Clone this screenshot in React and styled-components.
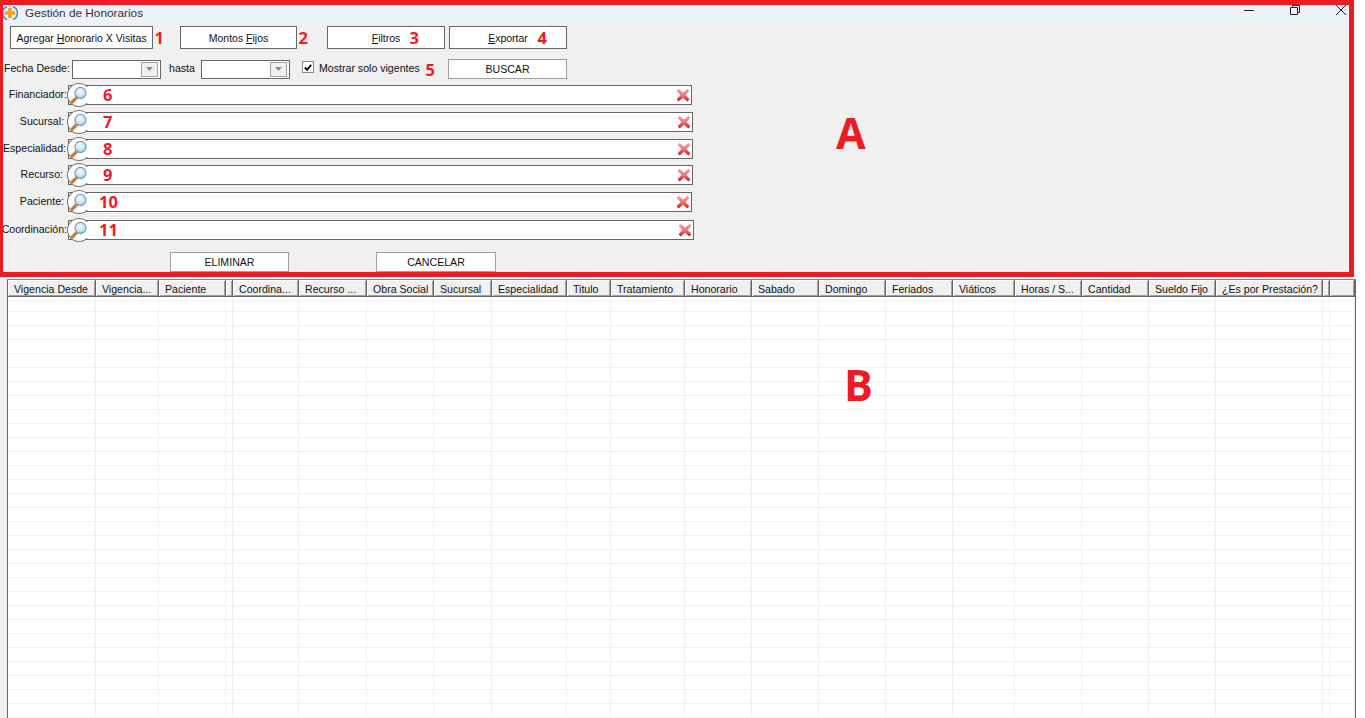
import React from 'react';
import styled, { createGlobalStyle } from 'styled-components';

const FONT = `"Liberation Sans", Arial, sans-serif`;
const RED = '#ed1c24';

const COLUMNS = [
  ['Vigencia Desde', 88],
  ['Vigencia...', 63],
  ['Paciente', 67],
  ['', 7],
  ['Coordina...', 66],
  ['Recurso ...', 68],
  ['Obra Social', 67],
  ['Sucursal', 58],
  ['Especialidad', 75],
  ['Titulo', 44],
  ['Tratamiento', 74],
  ['Honorario', 67],
  ['Sabado', 67],
  ['Domingo', 67],
  ['Feriados', 67],
  ['Viáticos', 62],
  ['Horas / S...', 67],
  ['Cantidad', 67],
  ['Sueldo Fijo', 67],
  ['¿Es por Prestación?', 107],
  ['', 7],
  ['', 25],
];

const LOOKUPS = [
  { label: 'Financiador:', gap: 0, pad: 1, width: 624, num: '6' },
  { label: 'Sucursal:', gap: 7, pad: 4, width: 625, num: '7' },
  { label: 'Especialidad:', gap: 7, pad: 2, width: 625, num: '8' },
  { label: 'Recurso:', gap: 6, pad: 5, width: 625, num: '9' },
  { label: 'Paciente:', gap: 7, pad: 4, width: 624, num: '10' },
  { label: 'Coordinación:', gap: 8, pad: 1, width: 626, num: '11' },
];

const ROW_COUNT = 30;

function Magnifier() {
  return (
    <svg width="20" height="20" viewBox="0 0 20 20">
      <defs>
        <radialGradient id="glass" cx="0.45" cy="0.35" r="0.75">
          <stop offset="0" stopColor="#f4fbff" />
          <stop offset="0.6" stopColor="#bfe3f7" />
          <stop offset="1" stopColor="#5fa8d8" />
        </radialGradient>
      </defs>
      <path d="M3.2 17 L8 12.2" stroke="#d98a34" strokeWidth="3.4" strokeLinecap="round" />
      <path d="M3 17.4 L6.4 14" stroke="#6f6a70" strokeWidth="1" strokeLinecap="round" />
      <circle cx="11.5" cy="8" r="5.6" fill="url(#glass)" stroke="#7f98ad" strokeWidth="1.1" />
    </svg>
  );
}

function ClearIcon() {
  return (
    <svg width="14" height="14" viewBox="0 0 14 14">
      <defs>
        <linearGradient id="cross" x1="0" y1="0" x2="0" y2="1">
          <stop offset="0" stopColor="#f4a6a6" />
          <stop offset="0.55" stopColor="#e87474" />
          <stop offset="1" stopColor="#d40f1c" />
        </linearGradient>
      </defs>
      <path
        d="M2.5 0.8 L7 4.6 L11.5 0.8 L13.4 3 L9.6 7 L13.4 11.2 L11.4 13.4 L7 9.8 L2.6 13.4 L0.6 11.2 L4.4 7 L0.6 3 Z"
        fill="url(#cross)"
      />
    </svg>
  );
}

function AppLogo() {
  return (
    <svg width="16" height="16" viewBox="0 0 16 16">
      <path d="M5 1.5 A7 7 0 0 0 5 14.5" fill="none" stroke="#4a8fb5" strokeWidth="1.6" />
      <path d="M11 1.5 A7 7 0 0 1 11 14.5" fill="none" stroke="#4a8fb5" strokeWidth="1.6" />
      <path d="M6 3 H10 V6 H13 V10 H10 V13 H6 V10 H3 V6 H6 Z" fill="#f5a623" />
    </svg>
  );
}

function ComboArrow() {
  return (
    <ComboButton>
      <svg width="7" height="4" viewBox="0 0 7 4">
        <path d="M0 0 H7 L3.5 4 Z" fill="#8a8a8a" />
      </svg>
    </ComboButton>
  );
}

export default function App() {
  return (
    <>
      <GlobalStyle />
      <Page>
        <Window>
          <TitleBar>
            <AppLogo />
            <TitleText>Gestión de Honorarios</TitleText>
            <WindowControls>
              <svg width="12" height="12" viewBox="0 0 12 12">
                <path d="M1 6.5 H11" stroke="#222" strokeWidth="1" />
              </svg>
              <svg width="12" height="12" viewBox="0 0 12 12">
                <path d="M1.5 3.5 H8.5 V10.5 H1.5 Z M3.5 3 V1.5 H10.5 V8.5 H9" fill="none" stroke="#222" strokeWidth="1" />
              </svg>
              <svg width="12" height="12" viewBox="0 0 12 12">
                <path d="M1 1 L11 11 M11 1 L1 11" stroke="#222" strokeWidth="1" />
              </svg>
            </WindowControls>
          </TitleBar>

          <Form>
            <ButtonRow>
              <ToolButton $width={143} $after={27}>
                Agregar <u>H</u>onorario X Visitas
                <Mark $right={-12} $lift={1}>1</Mark>
              </ToolButton>
              <ToolButton $width={117} $after={30}>
                Montos <u>F</u>ijos
                <Mark $right={-12} $lift={1}>2</Mark>
              </ToolButton>
              <ToolButton $width={118} $after={4}>
                <u>F</u>iltros
                <Mark $right={25} $lift={1}>3</Mark>
              </ToolButton>
              <ToolButton $width={118}>
                <u>E</u>xportar
                <Mark $right={19} $lift={1}>4</Mark>
              </ToolButton>
            </ButtonRow>

            <DateRow>
              <DateLabel>Fecha Desde:</DateLabel>
              <DateInput>
                <ComboArrow />
              </DateInput>
              <HastaLabel>hasta</HastaLabel>
              <DateInput>
                <ComboArrow />
              </DateInput>
              <CheckBox>
                <svg width="11" height="11" viewBox="0 0 11 11">
                  <path d="M2 5.5 L4.5 8 L9 2.5" fill="none" stroke="#000" strokeWidth="2" />
                </svg>
              </CheckBox>
              <CheckText>
                Mostrar solo vigentes
                <Mark $right={-15}>5</Mark>
              </CheckText>
              <FlatButton $width={119} $left={28}>BUSCAR</FlatButton>
            </DateRow>

            <LookupList>
              {LOOKUPS.map(row => (
                <LookupRow key={row.label} $gap={row.gap}>
                  <LookupLabel $pad={row.pad}>{row.label}</LookupLabel>
                  <LookupField $width={row.width}>
                    <MagnifierBadge>
                      <Magnifier />
                    </MagnifierBadge>
                    <FieldMark $wide={row.num.length > 1}>{row.num}</FieldMark>
                    <ClearSlot>
                      <ClearIcon />
                    </ClearSlot>
                  </LookupField>
                </LookupRow>
              ))}
            </LookupList>

            <ActionRow>
              <FlatButton $width={119} $left={170}>ELIMINAR</FlatButton>
              <FlatButton $width={120} $left={87}>CANCELAR</FlatButton>
            </ActionRow>
          </Form>

          <SectionMark $top={104} $left={836}>A</SectionMark>
          <RedFrame />
        </Window>

        <GridArea>
          <Grid>
            <HeaderRow>
              {COLUMNS.map(([title, width], i) => (
                <HeaderCell key={i} $width={width}>{title}</HeaderCell>
              ))}
            </HeaderRow>
            <Body>
              {Array.from({ length: ROW_COUNT }).map((_, r) => (
                <BodyRow key={r}>
                  {COLUMNS.map(([, width], i) => (
                    <BodyCell key={i} $width={width} />
                  ))}
                </BodyRow>
              ))}
            </Body>
            <SectionMark $top={76} $left={836}>B</SectionMark>
          </Grid>
        </GridArea>
      </Page>
    </>
  );
}

const GlobalStyle = createGlobalStyle`
  html, body {
    margin: 0;
    padding: 0;
    background: #fff;
    overflow: hidden;
  }
  * {
    box-sizing: border-box;
  }
`;

const Page = styled.div`
  width: 1365px;
  height: 718px;
  overflow: hidden;
  font-family: ${FONT};
  font-size: 10.6px;
  color: #111;
  background: #fff;
`;

const Window = styled.div`
  position: relative;
  width: 1354px;
  height: 277px;
  background: #f0f0f0;
`;

const RedFrame = styled.div`
  position: absolute;
  inset: 0;
  border-style: solid;
  border-color: ${RED};
  border-width: 5px 5px 5px 3px;
  pointer-events: none;
`;

const TitleBar = styled.div`
  height: 23px;
  display: flex;
  align-items: center;
  padding: 2px 7px 0 2px;
  background: #edf2fa;
`;

const TitleText = styled.span`
  margin-left: 7px;
  font-size: 11.8px;
  color: #333;
`;

const WindowControls = styled.div`
  margin-left: auto;
  display: flex;
  gap: 34px;
  margin-top: -5px;
  svg {
    display: block;
  }
`;

const Form = styled.div`
  display: flex;
  flex-direction: column;
`;

const ButtonRow = styled.div`
  display: flex;
  padding: 3px 0 0 10px;
`;

const ToolButton = styled.div`
  position: relative;
  width: ${({ $width }) => $width}px;
  height: 23px;
  margin-right: ${({ $after }) => $after || 0}px;
  display: flex;
  align-items: center;
  justify-content: center;
  background: #fff;
  border: 1px solid #666;
  font-size: 10.5px;
  white-space: pre;
`;

const Mark = styled.span`
  position: absolute;
  top: calc(50% - ${({ $lift }) => $lift || 0}px);
  right: ${({ $right }) => $right}px;
  transform: translateY(-50%);
  font-family: "Open Sans", ${FONT};
  font-size: 16.5px;
  font-weight: 700;
  color: ${RED};
`;

const DateRow = styled.div`
  display: flex;
  align-items: center;
  height: 20px;
  margin-top: 10px;
  padding-left: 4px;
`;

const DateLabel = styled.span`
  width: 68px;
  padding-bottom: 2px;
  white-space: nowrap;
`;

const HastaLabel = styled.span`
  width: 40px;
  padding: 0 0 2px 8px;
`;

const DateInput = styled.div`
  width: 89px;
  height: 19px;
  display: flex;
  align-items: center;
  justify-content: flex-end;
  padding-right: 2px;
  background: #fff;
  border: 1px solid #666;
`;

const ComboButton = styled.div`
  width: 17px;
  height: 15px;
  display: flex;
  align-items: center;
  justify-content: center;
  background: #f0f0f0;
  border: 1px solid #a0a0a0;
`;

const CheckBox = styled.div`
  width: 12px;
  height: 12px;
  margin: -4px 0 0 12px;
  display: flex;
  align-items: center;
  justify-content: center;
  background: #fff;
  border: 1px solid #888;
`;

const CheckText = styled.span`
  position: relative;
  margin-left: 5px;
  width: 101px;
  padding-bottom: 2px;
  white-space: nowrap;
`;

const FlatButton = styled.div`
  width: ${({ $width }) => $width}px;
  height: 20px;
  margin-left: ${({ $left }) => $left}px;
  display: flex;
  align-items: center;
  justify-content: center;
  background: #fff;
  border: 1px solid #a0a0a0;
`;

const LookupList = styled.div`
  display: flex;
  flex-direction: column;
  margin-top: 6px;
`;

const LookupRow = styled.div`
  display: flex;
  align-items: center;
  height: 20px;
  margin-top: ${({ $gap }) => $gap}px;
`;

const LookupLabel = styled.span`
  width: 68px;
  flex: none;
  padding: 0 ${({ $pad }) => $pad}px 2px 0;
  text-align: right;
  white-space: nowrap;
`;

const LookupField = styled.div`
  position: relative;
  width: ${({ $width }) => $width}px;
  height: 20px;
  display: flex;
  align-items: center;
  background: #fff;
  border: 1px solid #666;
`;

const MagnifierBadge = styled.div`
  position: absolute;
  left: -2px;
  top: -3px;
  width: 24px;
  height: 24px;
  display: flex;
  align-items: center;
  justify-content: center;
  background: #fff;
  border: 1px solid #777;
  border-right-color: transparent;
  border-radius: 50%;
  svg {
    display: block;
  }
`;

const FieldMark = styled.span`
  position: absolute;
  left: ${({ $wide }) => ($wide ? 30 : 34)}px;
  top: calc(50% - 1px);
  transform: translateY(-50%);
  font-family: "Open Sans", ${FONT};
  font-size: 16.5px;
  font-weight: 700;
  color: ${RED};
`;

const ClearSlot = styled.div`
  margin-left: auto;
  padding-right: 1px;
  display: flex;
  align-items: center;
  svg {
    display: block;
  }
`;

const ActionRow = styled.div`
  display: flex;
  margin-top: 12px;
`;

const SectionMark = styled.span`
  position: absolute;
  top: ${({ $top }) => $top}px;
  left: ${({ $left }) => $left}px;
  font-family: "Open Sans", ${FONT};
  font-size: 43px;
  line-height: 58px;
  font-weight: 700;
  color: ${RED};
`;

const GridArea = styled.div`
  height: 441px;
  padding: 2px 0 0 7px;
  background: linear-gradient(#fff 0 2px, #f0f0f0 2px) left / 7px 100% no-repeat;
`;

const Grid = styled.div`
  position: relative;
  width: 1349px;
  height: 439px;
  overflow: hidden;
  background: #fff;
  border-left: 1px solid #666;
  border-top: 1px solid #888;
  border-right: 1px solid #666;
`;

const HeaderRow = styled.div`
  display: flex;
  height: 17px;
  border-bottom: 1px solid #666;
`;

const HeaderCell = styled.div`
  flex: none;
  width: ${({ $width }) => $width}px;
  padding-left: 6px;
  overflow: hidden;
  background: #f0f0f0;
  border-right: 1px solid #666;
  box-shadow: inset 1px 1px #fff, inset -1px -1px #a0a0a0;
  font-size: 10.6px;
  line-height: 18px;
  white-space: nowrap;
`;

const Body = styled.div`
  display: flex;
  flex-direction: column;
`;

const BodyRow = styled.div`
  display: flex;
  flex: none;
  height: 14px;
  border-bottom: 1px solid #f0f0f0;
  &:first-child {
    height: 15px;
  }
`;

const BodyCell = styled.div`
  flex: none;
  width: ${({ $width }) => $width}px;
  border-right: 1px solid #f0f0f0;
`;
